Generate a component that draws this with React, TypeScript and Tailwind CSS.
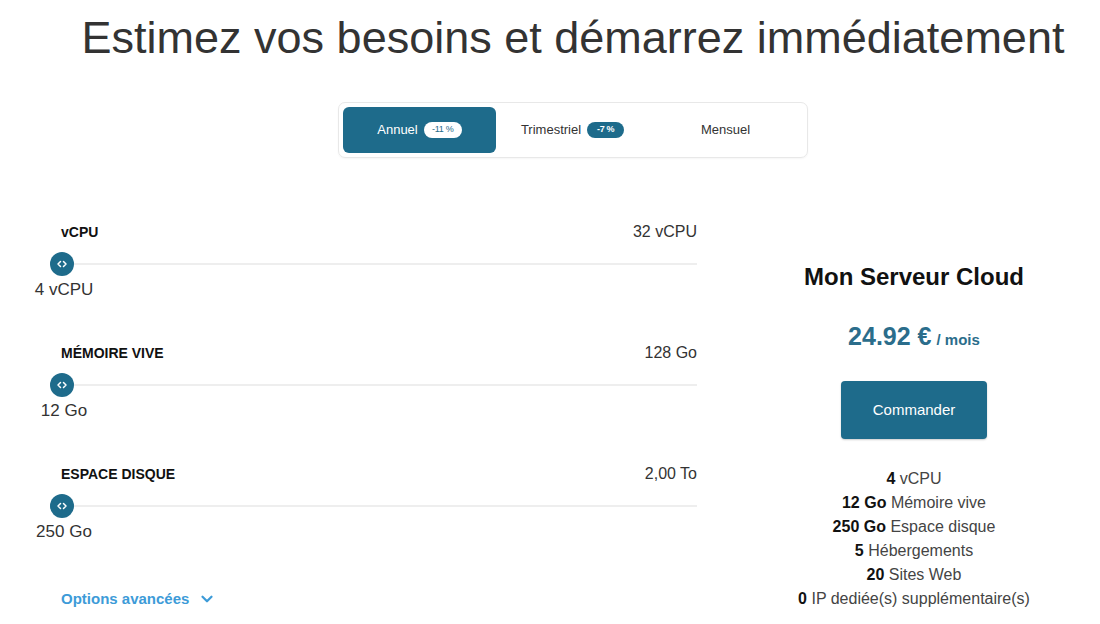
import React from "react";
import { ChevronsLeftRight, ChevronDown } from "lucide-react";

const font = { fontFamily: '"Liberation Sans", Arial, sans-serif' };

function SliderBlock({ label, max, value }: { label: string; max: string; value: string }) {
  return (
    <div className="flex flex-col">
      <div className="flex items-center justify-between pl-[27px] h-[16px]">
        <span className="text-[14px] font-bold text-[#111]">{label}</span>
        <span className="text-[16px] text-[#333]">{max}</span>
      </div>
      <div className="flex items-center pl-[16px] mt-[12px] h-[24px]">
        <div className="w-[24px] h-[24px] rounded-full bg-[#1e6b8b] flex items-center justify-center shrink-0 z-10">
          <ChevronsLeftRight size={12} color="white" strokeWidth={3} />
        </div>
        <div className="flex-1 h-[2px] bg-[#eeeeee] -ml-[12px]" />
      </div>
      <div className="w-[60px] text-center text-[17px] text-[#333] leading-[20px] mt-[4px] whitespace-nowrap">{value}</div>
    </div>
  );
}

export default function App() {
  return (
    <div className="w-[1100px] h-[624px] bg-white overflow-hidden text-[#333]" style={font}>
      <h1 className="text-[45px] leading-[45px] text-[#333] font-normal text-center pl-[46px] pt-[15px] whitespace-nowrap">
        Estimez vos besoins et démarrez immédiatement
      </h1>
      <div className="flex justify-center pl-[46px] mt-[42px]">
        <div className="w-[470px] h-[56px] border border-[#e8e8e8] rounded-[7px] p-[4px] flex shadow-[0_1px_2px_rgba(0,0,0,0.04)]">
          <div className="w-[153px] h-[46px] bg-[#1e6b8b] rounded-[6px] flex items-center justify-center gap-[6px]">
            <span className="text-white text-[13px]">Annuel</span>
            <span className="bg-white text-[#1e6b8b] text-[9px] rounded-full w-[38px] h-[16px] flex items-center justify-center tracking-[-0.3px]">-11 %</span>
          </div>
          <div className="w-[153px] h-[46px] flex items-center justify-center gap-[6px]">
            <span className="text-[#333] text-[13px]">Trimestriel</span>
            <span className="bg-[#1e6b8b] text-white text-[9px] font-bold rounded-full w-[37px] h-[16px] flex items-center justify-center tracking-[-0.3px]">-7 %</span>
          </div>
          <div className="w-[153px] h-[46px] flex items-center justify-center">
            <span className="text-[#333] text-[13px]">Mensuel</span>
          </div>
        </div>
      </div>
      <div className="flex mt-[66px]">
        <div className="w-[663px] ml-[34px] flex flex-col">
          <div className="flex flex-col gap-[45px]">
            <SliderBlock label="vCPU" max="32 vCPU" value="4 vCPU" />
            <SliderBlock label="MÉMOIRE VIVE" max="128 Go" value="12 Go" />
            <SliderBlock label="ESPACE DISQUE" max="2,00 To" value="250 Go" />
          </div>
          <div className="mt-[47px] h-[20px] pl-[27px] flex items-center gap-[9px] text-[#3d9bd8] text-[15px] font-bold">
            <span>Options avancées</span>
            <ChevronDown size={18} strokeWidth={3} />
          </div>
        </div>
        <div className="w-[268px] ml-[83px] flex flex-col items-center pt-[39px]">
          <div className="text-[24px] font-bold text-[#111] leading-[28px] whitespace-nowrap">Mon Serveur Cloud</div>
          <div className="mt-[30px] h-[30px] flex items-baseline gap-[5px] text-[#2b6d8b] font-bold leading-[30px]">
            <span className="text-[25px]">24.92 €</span>
            <span className="text-[15px]">/ mois</span>
          </div>
          <button className="mt-[30px] w-[146px] h-[58px] bg-[#1e6b8b] rounded-[4px] text-white text-[15px] shadow-[0_1px_2px_rgba(0,0,0,0.2)]">
            Commander
          </button>
          <div className="mt-[28px] flex flex-col items-center text-[16px] leading-[24px] text-[#444] whitespace-nowrap">
            <div><b className="text-[#111]">4</b> vCPU</div>
            <div><b className="text-[#111]">12 Go</b> Mémoire vive</div>
            <div><b className="text-[#111]">250 Go</b> Espace disque</div>
            <div><b className="text-[#111]">5</b> Hébergements</div>
            <div><b className="text-[#111]">20</b> Sites Web</div>
            <div><b className="text-[#111]">0</b> IP dediée(s) supplémentaire(s)</div>
          </div>
        </div>
      </div>
    </div>
  );
}
